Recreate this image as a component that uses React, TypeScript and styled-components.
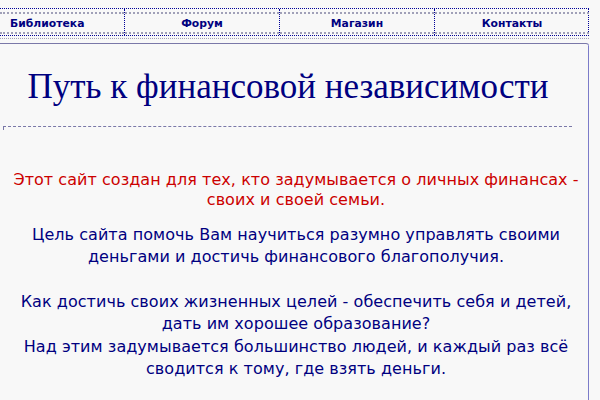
import React from "react";
import styled, { createGlobalStyle } from "styled-components";

const Global = createGlobalStyle`
  html, body { margin: 0; padding: 0; background: #f8f8f8; }
  body { font-family: "DejaVu Sans", Verdana, sans-serif; overflow: hidden; }
`;

const Page = styled.div`
  width: 600px;
  height: 400px;
  padding-top: 8px;
  box-sizing: border-box;
  overflow: hidden;
`;

const Nav = styled.div`
  display: grid;
  grid-template-columns: 124px 155px 155px 155px;
  width: 589px;
  border-top: 1px dotted #000099;
  border-bottom: 1px dotted #000099;
  border-right: 1px dotted #000099;
  box-sizing: border-box;
`;

const NavCell = styled.div<{ $first?: boolean }>`
  border-left: ${(p) => (p.$first ? "none" : "1px dotted #000099")};
  padding: 3px 0 1px;
`;

const NavInner = styled.div<{ $left?: boolean }>`
  border-top: 2px dotted #a0a0b8;
  border-bottom: 2px dotted #a0a0b8;
  height: 18px;
  line-height: 19px;
  font-size: 10.8px;
  font-weight: bold;
  color: #000080;
  text-align: ${(p) => (p.$left ? "left" : "center")};
  padding-left: ${(p) => (p.$left ? "10px" : "0")};
`;

const NavShadow = styled.div`
  width: 589px;
  height: 0;
  margin-top: 2px;
  border-top: 1px dotted #a0a0b8;
`;

const Panel = styled.div`
  margin-top: 4px;
  width: 589px;
  box-sizing: border-box;
  border-top: 1px solid #7a78a8;
  border-right: 1px dotted #000099;
  border-top-right-radius: 3px;
  height: 400px;
`;

const Title = styled.h1`
  margin: 0;
  padding: 22px 12px 0 0;
  font-family: "Liberation Serif", "Times New Roman", serif;
  font-weight: normal;
  font-size: 35px;
  line-height: 42px;
  color: #000080;
  text-align: center;
`;

const Rule = styled.div`
  margin: 18px 16px 0 3px;
  height: 3px;
  border-top: 1px dashed #7a78a8;
  border-left: 1px solid #7a78a8;
`;

const Body = styled.div`
  padding-top: 40px;
  padding-left: 4px;
  font-family: "DejaVu Sans", Verdana, sans-serif;
  font-size: 16px;
  letter-spacing: 0.05px;
  text-align: center;
`;

const Para = styled.p<{ $red?: boolean; $gap: number; $lh: number }>`
  margin: 0 0 ${(p) => p.$gap}px;
  line-height: ${(p) => p.$lh}px;
  color: ${(p) => (p.$red ? "#cc0000" : "#000080")};
`;

export default function App() {
  return (
    <>
      <Global />
      <Page>
        <Nav>
          <NavCell $first>
            <NavInner $left>Библиотека</NavInner>
          </NavCell>
          <NavCell>
            <NavInner>Форум</NavInner>
          </NavCell>
          <NavCell>
            <NavInner>Магазин</NavInner>
          </NavCell>
          <NavCell>
            <NavInner>Контакты</NavInner>
          </NavCell>
        </Nav>
        <NavShadow />
        <Panel>
          <Title>Путь к финансовой независимости</Title>
          <Rule />
          <Body>
            <Para $red $gap={14} $lh={20}>
              Этот сайт создан для тех, кто задумывается о личных финансах -
              <br />
              своих и своей семьи.
            </Para>
            <Para $gap={23} $lh={22}>
              Цель сайта помочь Вам научиться разумно управлять своими
              <br />
              деньгами и достичь финансового благополучия.
            </Para>
            <Para $gap={0} $lh={22.4}>
              Как достичь своих жизненных целей - обеспечить себя и детей,
              <br />
              дать им хорошее образование?
              <br />
              Над этим задумывается большинство людей, и каждый раз всё
              <br />
              сводится к тому, где взять деньги.
            </Para>
          </Body>
        </Panel>
      </Page>
    </>
  );
}
